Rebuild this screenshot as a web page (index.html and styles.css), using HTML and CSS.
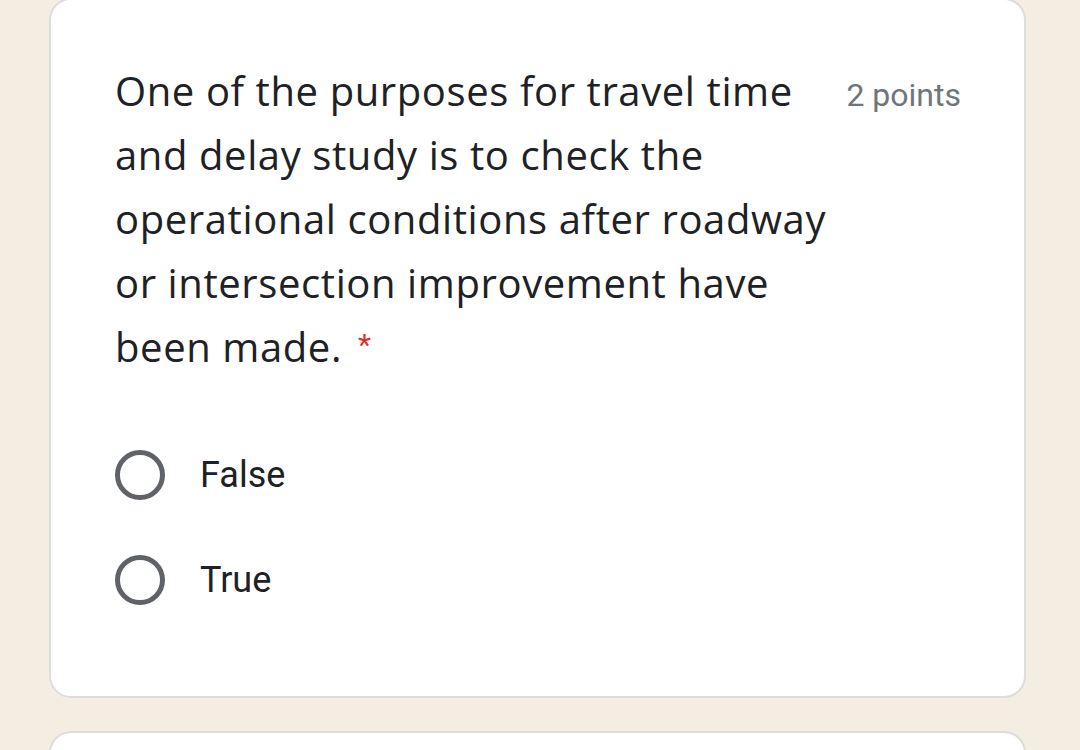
FILE: index.html
```html
<!DOCTYPE html>
<html>
<head>
<meta charset="utf-8">
<link rel="stylesheet" href="styles.css">
</head>
<body>
<div class="card">
  <div class="head">
    <div class="question">One of the purposes for travel time and delay study is to check the operational conditions after roadway or intersection improvement have been made. <span class="req">*</span></div>
    <div class="points">2 points</div>
  </div>
  <div class="options">
    <div class="option"><span class="radio"></span><span class="label">False</span></div>
    <div class="option"><span class="radio"></span><span class="label">True</span></div>
  </div>
</div>
<div class="card next"></div>
</body>
</html>
```
FILE: styles.css
```css
html, body {
  margin: 0;
  padding: 0;
  background: #f4ede2;
  height: 750px;
  overflow: hidden;
}
.card {
  margin: -2px 0 0 49px;
  width: 977px;
  box-sizing: border-box;
  background: #fff;
  border: 2px solid #dcdcdc;
  border-radius: 22px;
  padding: 59px 63px 0 64px;
  height: 700px;
}
.card.next {
  margin-top: 33px;
  height: 17px;
  border-bottom: none;
  border-radius: 22px 22px 0 0;
}
.head {
  display: flex;
  align-items: flex-start;
  justify-content: space-between;
}
.question {
  width: 730px;
  font-family: "Open Sans", sans-serif;
  font-size: 40px;
  letter-spacing: 0.6px;
  line-height: 64px;
  color: #202124;
}
.req {
  font-family: Roboto, sans-serif;
  font-size: 30px;
  line-height: 1;
  vertical-align: 7px;
  color: #d93025;
  margin-left: 5px;
}
.points {
  font-family: Roboto, sans-serif;
  font-size: 32px;
  line-height: 64px;
  color: #70757a;
  padding-top: 4px;
}
.options {
  margin-top: 71px;
  display: flex;
  flex-direction: column;
  gap: 55px;
}
.option {
  display: flex;
  align-items: center;
  height: 50px;
}
.radio {
  width: 50px;
  height: 50px;
  box-sizing: border-box;
  border: 5px solid #5f6368;
  border-radius: 50%;
  flex: none;
}
.label {
  margin-left: 35px;
  font-family: Roboto, sans-serif;
  font-size: 36px;
  color: #202124;
}
```
